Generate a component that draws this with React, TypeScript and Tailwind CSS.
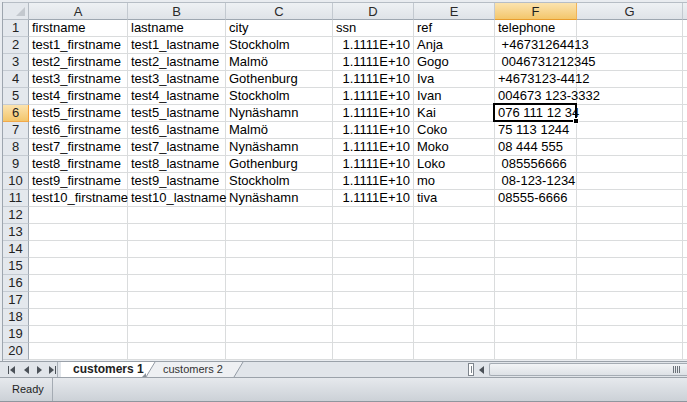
const COLS = [
  { key: "A", w: "w-[99px]" },
  { key: "B", w: "w-[98px]" },
  { key: "C", w: "w-[107px]" },
  { key: "D", w: "w-[81px]" },
  { key: "E", w: "w-[81px]" },
  { key: "F", w: "w-[82px]" },
  { key: "G", w: "w-[106px]" },
];

const DATA = [
  ["firstname", "lastname", "city", "ssn", "ref", "telephone"],
  ["test1_firstname", "test1_lastname", "Stockholm", "1.1111E+10", "Anja", " +46731264413"],
  ["test2_firstname", "test2_lastname", "Malmö", "1.1111E+10", "Gogo", " 0046731212345"],
  ["test3_firstname", "test3_lastname", "Gothenburg", "1.1111E+10", "Iva", "+4673123-4412"],
  ["test4_firstname", "test4_lastname", "Stockholm", "1.1111E+10", "Ivan", "004673 123-3332"],
  ["test5_firstname", "test5_lastname", "Nynäshamn", "1.1111E+10", "Kai", "076 111 12 34"],
  ["test6_firstname", "test6_lastname", "Malmö", "1.1111E+10", "Coko", "75 113 1244"],
  ["test7_firstname", "test7_lastname", "Nynäshamn", "1.1111E+10", "Moko", "08 444 555"],
  ["test8_firstname", "test8_lastname", "Gothenburg", "1.1111E+10", "Loko", " 085556666"],
  ["test9_firstname", "test9_lastname", "Stockholm", "1.1111E+10", "mo", " 08-123-1234"],
  ["test10_firstname", "test10_lastname", "Nynäshamn", "1.1111E+10", "tiva", "08555-6666"],
];

const SEL_ROW = 6;
const SEL_COL = 5;

function Triangle({ dir }: { dir: "l" | "r" }) {
  return (
    <svg width="5" height="8" viewBox="0 0 5 8" className="fill-[#4b5158]">
      {dir === "l" ? <polygon points="5,0 5,8 0,4" /> : <polygon points="0,0 0,8 5,4" />}
    </svg>
  );
}

function Row({ n }: { n: number }) {
  const cells = DATA[n - 1];
  const selRow = n === SEL_ROW;
  return (
    <div className="flex h-[17px] bg-white">
      <div
        className={
          selRow
            ? "w-[26px] shrink-0 border-r border-b border-r-[#f29d38] border-b-[#f2a94a] bg-linear-to-b from-[#fbe3ae] to-[#f3c66a] text-center leading-[16px] text-[#1f1f1f]"
            : "w-[26px] shrink-0 border-r border-b border-r-[#9ea7b1] border-b-[#c5cbd2] bg-[#e4e8ed] text-center leading-[16px] text-[#222]"
        }
      >
        {n}
      </div>
      {COLS.map((c, i) => {
        const v = cells ? cells[i] : undefined;
        const right = i === 3 && n > 1;
        const sel = selRow && i === SEL_COL;
        return (
          <div
            key={c.key}
            className={`${c.w} relative shrink-0 border-r border-b border-[#dadcdd] leading-[16px] ${
              right ? "text-right pr-[3px]" : "pl-[3px]"
            } ${sel ? "z-10" : ""}`}
          >
            {v !== undefined && <span className="relative z-[1] whitespace-pre">{v}</span>}
            {sel && (
              <div className="absolute z-[2] -left-[2px] -top-[2px] w-[84px] h-[19px] border-2 border-black">
                <div className="absolute -right-[4px] -bottom-[4px] w-[6px] h-[6px] bg-black border border-white" />
              </div>
            )}
          </div>
        );
      })}
      <div className="flex-1 border-b border-[#dadcdd]" />
    </div>
  );
}

export default function App() {
  const rows = Array.from({ length: 20 }, (_, i) => i + 1);
  return (
    <div className="w-[687px] h-[402px] overflow-hidden flex flex-col bg-[#e3e7ec] text-[13px] text-black font-['Liberation_Sans',Arial,sans-serif]">
      {/* sheet */}
      <div className="h-[361px] flex flex-col pl-[2px] bg-[#e9ecf0]">
        <div className="h-[2px]" />
        <div className="flex-1 flex flex-col border-l border-[#9da5ae] overflow-hidden">
          {/* column headers */}
          <div className="flex h-[18px] border-t border-[#b6bdc5]">
            <div className="w-[26px] shrink-0 relative border-r border-b border-[#b3bac2] bg-[#e4e8ed]">
              <svg width="9" height="9" viewBox="0 0 9 9" className="absolute right-[3px] bottom-[3px]">
                <polygon points="9,0 9,9 0,9" fill="#c3c8ce" />
              </svg>
            </div>
            {COLS.map((c, i) => (
              <div
                key={c.key}
                className={
                  i === SEL_COL
                    ? `${c.w} shrink-0 border-r border-b border-r-[#f1b458] border-b-[#e89d2e] bg-linear-to-b from-[#fbe3ae] to-[#f3c66a] text-center leading-[17px] text-[#1f1f1f]`
                    : `${c.w} shrink-0 border-r border-b border-r-[#c3c9d0] border-b-[#9ea7b1] bg-linear-to-b from-[#eef1f4] to-[#dfe3e8] text-center leading-[17px] text-[#2a2a2a]`
                }
              >
                {c.key}
              </div>
            ))}
            <div className="flex-1 border-b border-[#9ea7b1] bg-linear-to-b from-[#eef1f4] to-[#dfe3e8]" />
          </div>
          {rows.map((n) => (
            <Row key={n} n={n} />
          ))}
        </div>
      </div>

      {/* sheet tabs + horizontal scrollbar */}
      <div className="h-[16px] flex border-t border-[#9aa1a9] bg-[#e1e5ea] text-[12px]">
        <div className="w-[58px] shrink-0 flex items-center pl-[8px] border-r border-[#aab1b9]">
          <div className="flex items-center w-[14px]">
            <div className="w-[1px] h-[8px] bg-[#4b5158] mr-[1px]" />
            <Triangle dir="l" />
          </div>
          <div className="w-[14px] flex pl-[2px]">
            <Triangle dir="l" />
          </div>
          <div className="w-[13px] flex pl-[1px]">
            <Triangle dir="r" />
          </div>
          <div className="flex items-center">
            <Triangle dir="r" />
            <div className="w-[1px] h-[8px] bg-[#4b5158] ml-[1px]" />
          </div>
        </div>
        <div className="relative w-[190px] shrink-0 flex">
          <svg width="190" height="15" viewBox="0 0 190 15" className="absolute left-0 top-0">
            <polygon points="88,0 185,0 176,15 90,15" fill="#eef0f3" />
            <polyline points="176,15 185,0" fill="none" stroke="#939ba5" strokeWidth="1" />
            <polygon points="3,0 97,0 88,15 3,15" fill="#ffffff" />
            <polyline points="88,15 97,0" fill="none" stroke="#939ba5" strokeWidth="1" />
            <polygon points="84,15 88,11 88,15" fill="#8b929a" />
          </svg>
          <span className="relative ml-[15px] w-[88px] font-bold text-[12px] leading-[15px] text-[#222]">
            customers 1
          </span>
          <span className="relative ml-[2px] text-[11px] leading-[15px] text-[#333]">customers 2</span>
        </div>
        <div className="flex-1" />
        <div className="w-[6px] h-[13px] mt-[1px] bg-white border border-[#7d848c] flex justify-center items-center">
          <div className="w-[1px] h-[7px] bg-[#7d848c]" />
        </div>
        <div className="w-[15px] flex items-center justify-center">
          <Triangle dir="l" />
        </div>
        <div className="w-[198px] shrink-0 mt-[1px] h-[13px] rounded-l-[2px] border border-r-0 border-[#a5acb4] bg-linear-to-b from-[#f2f4f6] to-[#dde1e6] flex items-center justify-end pr-[7px]">
          <div className="flex gap-[1px]">
            <div className="w-[1px] h-[7px] bg-[#6b727a]" />
            <div className="w-[1px] h-[7px] bg-[#6b727a]" />
            <div className="w-[1px] h-[7px] bg-[#6b727a]" />
            <div className="w-[1px] h-[7px] bg-[#6b727a]" />
          </div>
        </div>
      </div>

      {/* status bar */}
      <div className="h-[25px] flex border-t border-b border-t-[#9ba2aa] border-b-[#8f969e] bg-linear-to-b from-[#e6e9ed] to-[#ccd1d7] text-[11px] text-[#1e1e1e]">
        <div className="w-[53px] pl-[12px] leading-[22px] border-r border-[#a4abb3]">Ready</div>
      </div>
    </div>
  );
}
